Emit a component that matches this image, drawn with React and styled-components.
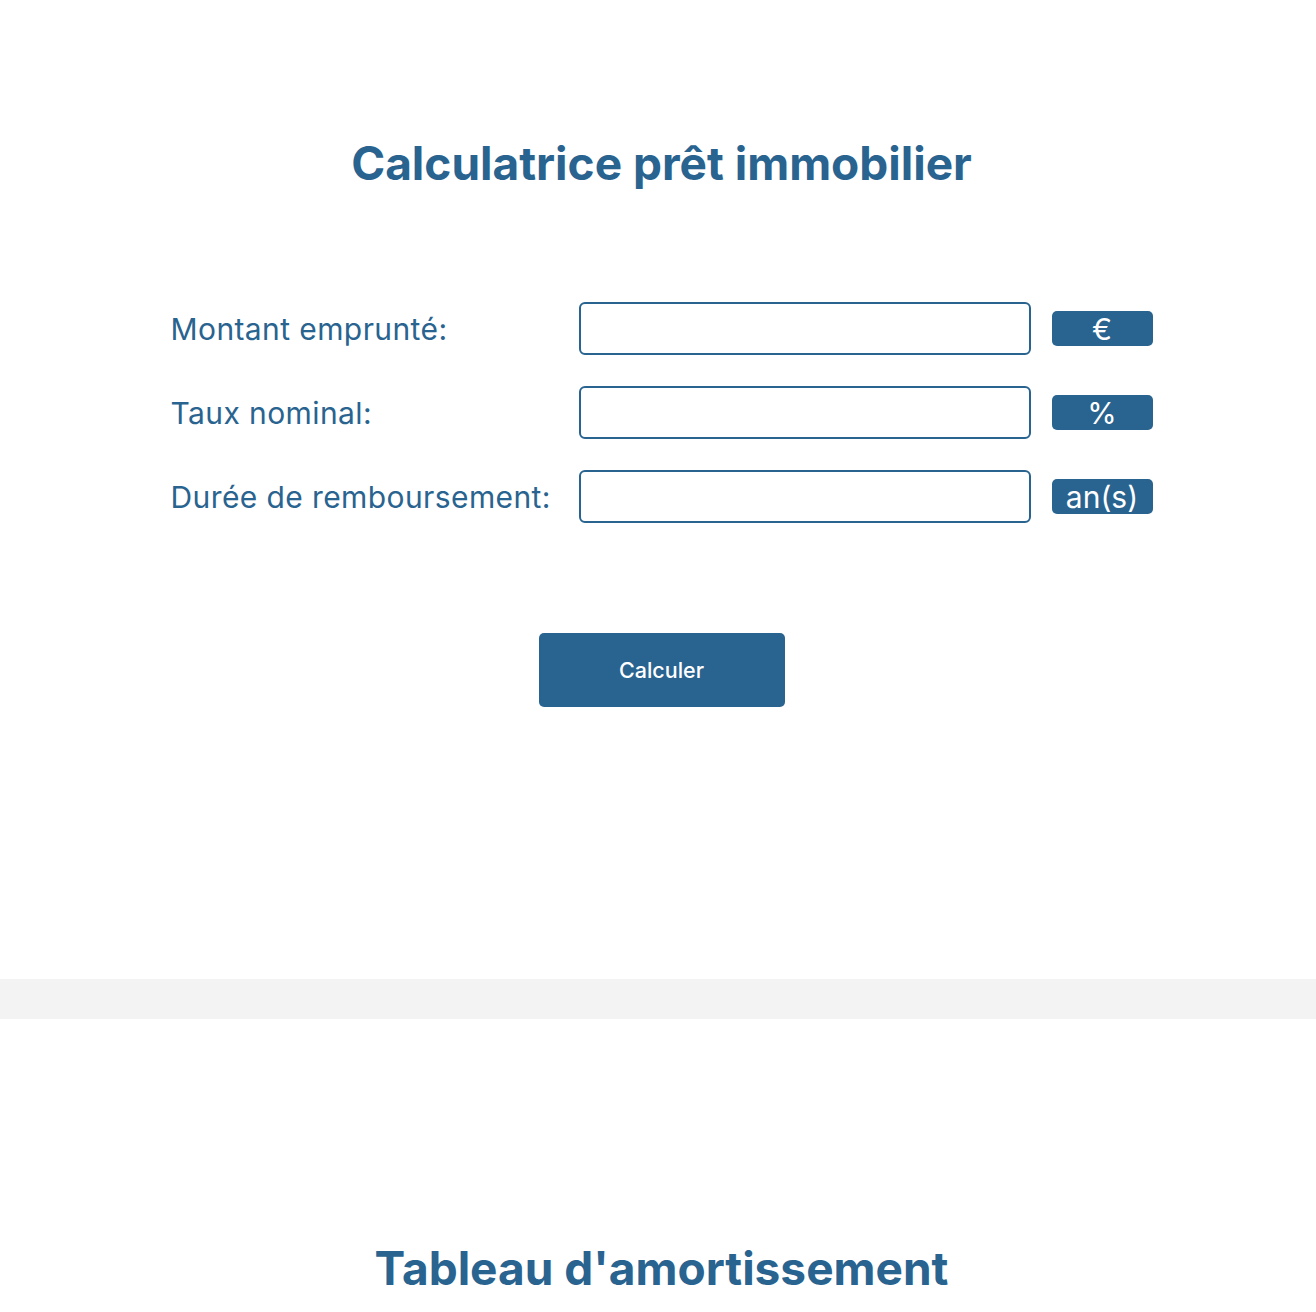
import React from "react";
import styled, { createGlobalStyle } from "styled-components";

const Global = createGlobalStyle`
  html, body { margin: 0; padding: 0; background: #fff; }
  body { font-family: Inter, "Noto Sans", sans-serif; color: #29638f; }
  * { box-sizing: border-box; }
`;

const Page = styled.div`
  display: flex;
  flex-direction: column;
  width: 100%;
`;

const Section = styled.section`
  display: flex;
  flex-direction: column;
  align-items: center;
  padding-top: ${(p) => p.$top}px;
  padding-left: 7px;
  height: ${(p) => p.$height}px;
`;

const Title = styled.h1`
  margin: 0;
  font-size: 46px;
  font-weight: 700;
  line-height: 56px;
  letter-spacing: 0;
  color: #29638f;
`;

const Form = styled.div`
  display: grid;
  grid-template-columns: 387px 452px 101px;
  column-gap: 21px;
  row-gap: 31px;
  align-items: center;
  width: 982px;
  margin-top: 111px;
`;

const Label = styled.label`
  font-size: 30px;
  font-weight: 400;
  letter-spacing: 0.4px;
  white-space: nowrap;
  color: #29638f;
`;

const Input = styled.input`
  height: 53px;
  width: 100%;
  border: 2px solid #29638f;
  border-radius: 6px;
  background: #fff;
  font-family: inherit;
  font-size: 20px;
  padding: 0 12px;
  outline: none;
`;

const Unit = styled.span`
  display: flex;
  align-items: center;
  justify-content: center;
  height: 35px;
  border-radius: 5px;
  background: #29638f;
  color: #fff;
  font-size: 30px;
  font-weight: 400;
  line-height: 1;
  white-space: nowrap;
`;

const Button = styled.button`
  margin-top: 110px;
  width: 246px;
  height: 74px;
  border: none;
  border-radius: 5px;
  background: #29638f;
  color: #fff;
  font-family: inherit;
  font-size: 21.5px;
  font-weight: 500;
  cursor: pointer;
`;

const Band = styled.div`
  height: 40px;
  background: #f3f3f3;
`;

const rows = [
  ["Montant emprunté:", "€"],
  ["Taux nominal:", "%"],
  ["Durée de remboursement:", "an(s)"],
];

export default function App() {
  return (
    <Page>
      <Global />
      <Section $top={135} $height={979}>
        <Title>Calculatrice prêt immobilier</Title>
        <Form>
          {rows.map(([label, unit]) => (
            <React.Fragment key={label}>
              <Label>{label}</Label>
              <Input type="text" />
              <Unit>{unit}</Unit>
            </React.Fragment>
          ))}
        </Form>
        <Button>Calculer</Button>
      </Section>
      <Band />
      <Section $top={221} $height={293}>
        <Title>Tableau d'amortissement</Title>
      </Section>
    </Page>
  );
}
